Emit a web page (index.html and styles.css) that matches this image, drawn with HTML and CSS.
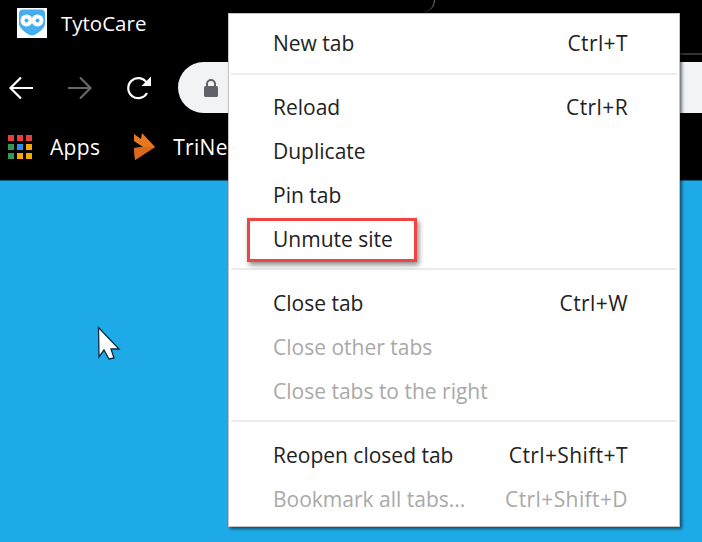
FILE: index.html
```html
<!DOCTYPE html>
<html>
<head>
    <meta charset="UTF-8">
    <title>TytoCare</title>
    <link rel="stylesheet" href="styles.css">
</head>
<body>
<div class="browser">
    <div class="tab_row">
        <svg class="favicon" width="30" height="30" viewBox="0 0 30 30">
            <rect width="30" height="30" fill="#fff"/>
            <path d="M6 1.500h18c2.500 0 4 1.500 4 4V16c0 4-9 11.500-13 11.500S2 20 2 16V5.500c0-2.500 1.500-4 4-4z" fill="#45aef0"/>
            <circle cx="9.500" cy="12.500" r="6" fill="#fff"/>
            <circle cx="20.500" cy="12.500" r="6" fill="#fff"/>
            <circle cx="9.500" cy="12.500" r="2" fill="#45aef0"/>
            <circle cx="20.500" cy="12.500" r="2" fill="#45aef0"/>
        </svg>
        <span class="tab_title">TytoCare</span>
    </div>
    <div class="toolbar">
        <svg class="nav_icon" width="26" height="26" viewBox="0 0 26 26" fill="none" stroke="#fff" stroke-width="2.200">
            <path d="M25 13H3M13 2.500 2.500 13 13 23.500"/>
        </svg>
        <svg class="nav_icon" width="26" height="26" viewBox="0 0 26 26" fill="none" stroke="#666" stroke-width="2.200">
            <path d="M1 13h22M13 2.500 23.500 13 13 23.500"/>
        </svg>
        <svg class="nav_icon" width="26" height="26" viewBox="0 0 26 26" fill="none">
            <path d="M21 18a10 10 0 1 1-.500-10.500" stroke="#fff" stroke-width="2.200"/>
            <path d="M25 1.500V11h-9.500z" fill="#fff"/>
        </svg>
        <div class="omnibox">
            <svg width="16" height="20" viewBox="0 0 16 20">
                <path d="M4 9V6a4 4 0 0 1 8 0v3" fill="none" stroke="#5f6368" stroke-width="2"/>
                <rect x="1" y="8" width="14" height="11" rx="1.500" fill="#5f6368"/>
            </svg>
        </div>
    </div>
    <div class="bookmarks">
        <span class="apps_grid">
            <i class="r"></i><i class="r"></i><i class="r"></i>
            <i class="g"></i><i class="b"></i><i class="y"></i>
            <i class="g"></i><i class="y"></i><i class="y"></i>
        </span>
        <span class="bookmark apps_label">Apps</span>
        <svg class="trinet" width="21" height="27" viewBox="0 0 21 27">
            <path d="M0 1 7 6 8 0 21 14 1 27 0 15 9 14 0 8z" fill="#e87722"/>
            <path d="M0 15 9 14H21L1 27z" fill="#d9691d"/>
        </svg>
        <span class="bookmark">TriNet</span>
    </div>
</div>
<div class="desktop">
    <svg class="cursor" width="26" height="38" viewBox="0 0 26 38">
        <path d="M1.500 1.500 2 31l5-7 5 9 5-1-3-9h8z" fill="#fff" stroke="#0b2a40" stroke-width="1.300"/>
    </svg>
</div>

<div class="tab_curve"></div>
<div class="tab_line"></div>

<div class="context_menu">
    <span class="highlight_box"></span>
    <div class="menu_group">
        <div class="menu_item"><span>New tab</span><span class="shortcut">Ctrl+T</span></div>
    </div>
    <div class="menu_group">
        <div class="menu_item"><span>Reload</span><span class="shortcut">Ctrl+R</span></div>
        <div class="menu_item"><span>Duplicate</span></div>
        <div class="menu_item"><span>Pin tab</span></div>
        <div class="menu_item"><span>Unmute site</span></div>
    </div>
    <div class="menu_group">
        <div class="menu_item"><span>Close tab</span><span class="shortcut">Ctrl+W</span></div>
        <div class="menu_item disabled"><span>Close other tabs</span></div>
        <div class="menu_item disabled"><span>Close tabs to the right</span></div>
    </div>
    <div class="menu_group">
        <div class="menu_item"><span>Reopen closed tab</span><span class="shortcut">Ctrl+Shift+T</span></div>
        <div class="menu_item disabled"><span>Bookmark all tabs...</span><span class="shortcut">Ctrl+Shift+D</span></div>
    </div>
</div>
</body>
</html>
```
FILE: styles.css
```css
html, body {
    margin: 0;
    padding: 0;
}
body {
    width: 702px;
    height: 542px;
    overflow: hidden;
    position: relative;
    background: #1eaae6;
    font-family: "Open Sans", "Liberation Sans", sans-serif;
}
.browser {
    height: 181px;
    background: #000;
    color: #fff;
    border-bottom: 1px solid #0b5f86;
    box-sizing: border-box;
}
.tab_row {
    height: 62px;
    display: flex;
    align-items: flex-start;
    padding: 8px 0 0 17px;
    box-sizing: border-box;
}
.favicon {
    flex: none;
}
.tab_title {
    margin-left: 14px;
    font-size: 20.500px;
    line-height: 30px;
}
.toolbar {
    height: 51px;
    display: flex;
    align-items: center;
    padding-left: 8px;
}
.nav_icon {
    flex: none;
    margin-right: 33px;
}
.omnibox {
    flex: 1;
    height: 51px;
    margin-left: -7px;
    padding-left: 25px;
    display: flex;
    align-items: center;
    background: #f1f3f4;
    border-radius: 26px 0 0 26px;
}
.bookmarks {
    height: 67px;
    display: flex;
    align-items: center;
    padding: 0 0 0 8px;
}
.apps_grid {
    display: grid;
    grid-template-columns: repeat(3, 6px);
    grid-auto-rows: 6px;
    gap: 3px;
}
.apps_grid i {
    display: block;
}
.apps_grid .r { background: #e53f3f; }
.apps_grid .g { background: #2f9a57; }
.apps_grid .b { background: #2a8fe8; }
.apps_grid .y { background: #f5a80c; }
.bookmark {
    font-size: 21px;
    letter-spacing: 0.3px;
}
.apps_label {
    margin-left: 18px;
}
.trinet {
    margin-left: 34px;
}
.bookmarks .trinet + .bookmark {
    margin-left: 18px;
}
.tab_curve {
    position: absolute;
    left: 420px;
    top: -6px;
    width: 14px;
    height: 18px;
    border-right: 1px solid #777;
    border-radius: 0 0 12px 0;
}
.tab_line {
    position: absolute;
    left: 680px;
    top: 53px;
    width: 22px;
    height: 2px;
    background: #333;
}
.cursor {
    position: absolute;
    left: 97px;
    top: 326px;
}
.context_menu {
    position: absolute;
    left: 228px;
    top: 13px;
    width: 452px;
    box-sizing: border-box;
    background: #fff;
    border: 1px solid #c4c4c4;
    box-shadow: 2px 2px 3px rgba(0, 0, 0, 0.55);
    color: #222;
    font-size: 21px;
}
.menu_group {
    margin: 0 2px;
    padding: 11px 1px 7px 1px;
    border-bottom: 2px solid #ececec;
}
.menu_group:first-of-type {
    padding-top: 7px;
    padding-bottom: 8px;
}
.menu_group:nth-of-type(2) {
    padding-top: 10px;
}
.menu_group:last-of-type {
    padding-bottom: 5px;
    border-bottom: 0;
}
.menu_item {
    height: 44px;
    display: flex;
    align-items: center;
    justify-content: space-between;
    padding: 0 48px 0 41px;
}
.menu_item.disabled {
    color: #a9a9a9;
}
.shortcut {
    letter-spacing: 0.4px;
}
.highlight_box {
    position: absolute;
    left: 18px;
    top: 204px;
    width: 170px;
    height: 44px;
    box-sizing: border-box;
    border: 3px solid #ef4444;
    box-shadow: 2px 3px 5px rgba(0, 0, 0, 0.45);
}
```
